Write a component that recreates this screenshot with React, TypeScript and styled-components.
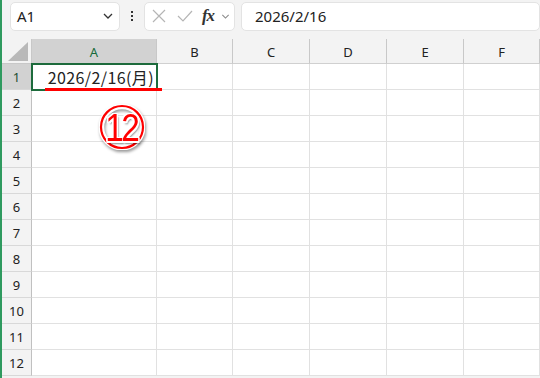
import React from "react";
import styled, { createGlobalStyle } from "styled-components";

const Global = createGlobalStyle`
  html, body { margin: 0; padding: 0; background: #f3f3f3; }
  #root { width: 540px; height: 378px; }
`;

const Frame = styled.div`
  position: relative;
  width: 540px;
  height: 378px;
  overflow: hidden;
  background: #f3f3f3;
  border-left: 2px solid #2f9a5f;
  box-sizing: border-box;
  font-family: "Noto Sans", "Liberation Sans", sans-serif;
`;

const FormulaBar = styled.div`
  display: flex;
  align-items: center;
  height: 39px;
  padding: 0 0 7px 8px;
  box-sizing: border-box;
  gap: 0;
`;

const Box = styled.div<{ $w?: number; $ml?: number }>`
  display: flex;
  align-items: center;
  height: 29px;
  box-sizing: border-box;
  background: #ffffff;
  border: 1px solid #e3e3e3;
  border-radius: 5px;
  ${(p) => (p.$w ? `width: ${p.$w}px; flex: none;` : "flex: 1;")}
  margin-left: ${(p) => p.$ml ?? 0}px;
`;

const NameText = styled.span`
  flex: 1;
  padding-left: 6px;
  font-size: 15px;
  color: #222;
  font-family: "Noto Sans", "Liberation Sans", sans-serif;
`;

const FormulaText = styled.span`
  padding-left: 13px;
  font-size: 15px;
  color: #222;
  font-family: "Noto Sans", "Liberation Sans", sans-serif;
`;

const Dots = styled.div`
  width: 24px;
  display: flex;
  flex-direction: column;
  align-items: center;
  gap: 2px;
  span {
    width: 2px;
    height: 2px;
    background: #333;
  }
`;

const IconSlot = styled.div<{ $w: number }>`
  width: ${(p) => p.$w}px;
  display: flex;
  align-items: center;
  justify-content: center;
`;

const Fx = styled.span`
  font-family: "Liberation Serif", "DejaVu Serif", serif;
  font-style: italic;
  font-weight: bold;
  font-size: 17px;
  color: #333;
  letter-spacing: -1px;
`;

const Grid = styled.div`
  display: grid;
  grid-template-columns: 30px 125px 76px 77px 77px 77px 76px;
  grid-template-rows: 25px repeat(12, 26px);
`;

const Corner = styled.div`
  position: relative;
  background: #f3f3f3;
  border-right: 1px solid #c8c8c8;
  border-bottom: 1px solid #c8c8c8;
  box-sizing: border-box;
  display: flex;
  align-items: flex-end;
  justify-content: flex-end;
  padding: 0 3px 2px 0;
`;

const ColHead = styled.div<{ $sel?: boolean }>`
  display: flex;
  align-items: center;
  justify-content: center;
  font-size: 13px;
  background: ${(p) => (p.$sel ? "#d2d2d2" : "#f3f3f3")};
  color: ${(p) => (p.$sel ? "#176b3a" : "#222")};
  border-right: 1px solid #c8c8c8;
  border-bottom: 1px solid #d0d0d0;
  box-sizing: border-box;
  padding-top: 1px;
`;

const RowHead = styled.div<{ $sel?: boolean }>`
  display: flex;
  align-items: center;
  justify-content: center;
  font-size: 13px;
  background: ${(p) => (p.$sel ? "#d2d2d2" : "#f3f3f3")};
  color: ${(p) => (p.$sel ? "#1b4f32" : "#222")};
  border-right: 1px solid #c0c0c0;
  border-bottom: 1px solid #d8d8d8;
  box-sizing: border-box;
`;

const Cell = styled.div<{ $active?: boolean }>`
  background: #fff;
  border-right: 1px solid #e1e1e1;
  border-bottom: 1px solid #e1e1e1;
  box-sizing: border-box;
  display: flex;
  align-items: center;
  justify-content: flex-end;
  padding-right: 4px;
  font-family: "Noto Sans CJK JP", "Noto Sans", sans-serif;
  font-size: 16px;
  letter-spacing: 0.4px;
  color: #222;
  ${(p) =>
    p.$active
      ? `outline: 2px solid #1d6b3c; outline-offset: -1px; position: relative; z-index: 1; padding-right: 2px;`
      : ""}
`;

const Underline = styled.div`
  position: absolute;
  left: 43px;
  top: 88px;
  width: 117px;
  height: 3px;
  background: #ff0000;
  z-index: 3;
`;

const Badge = styled.div`
  position: absolute;
  left: 97px;
  top: 104px;
  width: 46px;
  height: 46px;
  z-index: 3;
  display: flex;
  align-items: center;
  justify-content: center;
  svg {
    position: absolute;
    inset: 0;
    filter: drop-shadow(1px 2px 1.5px rgba(0, 0, 0, 0.4));
  }
`;

const BadgeText = styled.span`
  position: relative;
  font-family: "Liberation Sans", "Noto Sans", sans-serif;
  font-size: 38px;
  line-height: 1;
  color: #ff0000;
  letter-spacing: -3px;
  margin-left: -2px;
  margin-top: 1px;
  transform: scaleX(0.88);
  text-shadow: 1.5px 0 0 #fff, -1.5px 0 0 #fff, 0 1.5px 0 #fff, 0 -1.5px 0 #fff,
    1.5px 1.5px 0 #fff, -1.5px -1.5px 0 #fff, 1.5px -1.5px 0 #fff, -1.5px 1.5px 0 #fff,
    2px 3px 2px rgba(0, 0, 0, 0.45);
`;

const Chevron = ({ size = 14, color = "#333" }: { size?: number; color?: string }) => (
  <svg width={size} height={size} viewBox="0 0 14 14">
    <path d="M3 5 L7 9 L11 5" fill="none" stroke={color} strokeWidth="1.3" />
  </svg>
);

const cols = ["A", "B", "C", "D", "E", "F"];
const rows = Array.from({ length: 12 }, (_, i) => i + 1);

export default function App() {
  return (
    <>
      <Global />
      <Frame>
        <FormulaBar>
          <Box $w={110}>
            <NameText>A1</NameText>
            <IconSlot $w={22}>
              <Chevron />
            </IconSlot>
          </Box>
          <Dots>
            <span />
            <span />
            <span />
          </Dots>
          <Box $w={91}>
            <IconSlot $w={28}>
              <svg width="14" height="14" viewBox="0 0 14 14">
                <path d="M1 1 L13 13 M13 1 L1 13" stroke="#b5b5b5" strokeWidth="1.2" />
              </svg>
            </IconSlot>
            <IconSlot $w={24}>
              <svg width="16" height="14" viewBox="0 0 16 14">
                <path d="M1 7 L6 12 L15 2" fill="none" stroke="#b5b5b5" strokeWidth="1.2" />
              </svg>
            </IconSlot>
            <IconSlot $w={22}>
              <Fx>fx</Fx>
            </IconSlot>
            <IconSlot $w={12}>
              <Chevron size={11} color="#888" />
            </IconSlot>
          </Box>
          <Box $ml={6}>
            <FormulaText>2026/2/16</FormulaText>
          </Box>
        </FormulaBar>
        <Grid>
          <Corner>
            <svg width="20" height="19" viewBox="0 0 20 19">
              <polygon points="20,0 20,19 0,19" fill="#b9b9b9" />
            </svg>
          </Corner>
          {cols.map((c) => (
            <ColHead key={c} $sel={c === "A"}>
              {c}
            </ColHead>
          ))}
          {rows.map((r) => (
            <React.Fragment key={r}>
              <RowHead $sel={r === 1}>{r}</RowHead>
              {cols.map((c) => (
                <Cell key={c} $active={r === 1 && c === "A"}>
                  {r === 1 && c === "A" ? "2026/2/16(月)" : ""}
                </Cell>
              ))}
            </React.Fragment>
          ))}
        </Grid>
        <Underline />
        <Badge>
          <svg width="46" height="46" viewBox="0 0 46 46">
            <circle cx="23" cy="23" r="21" fill="none" stroke="#fff" strokeWidth="5" />
            <circle cx="23" cy="23" r="21" fill="none" stroke="#ff0000" strokeWidth="2.2" />
            <circle cx="23" cy="23" r="18.5" fill="none" stroke="#fff" strokeWidth="1.5" />
          </svg>
          <BadgeText>12</BadgeText>
        </Badge>
      </Frame>
    </>
  );
}
